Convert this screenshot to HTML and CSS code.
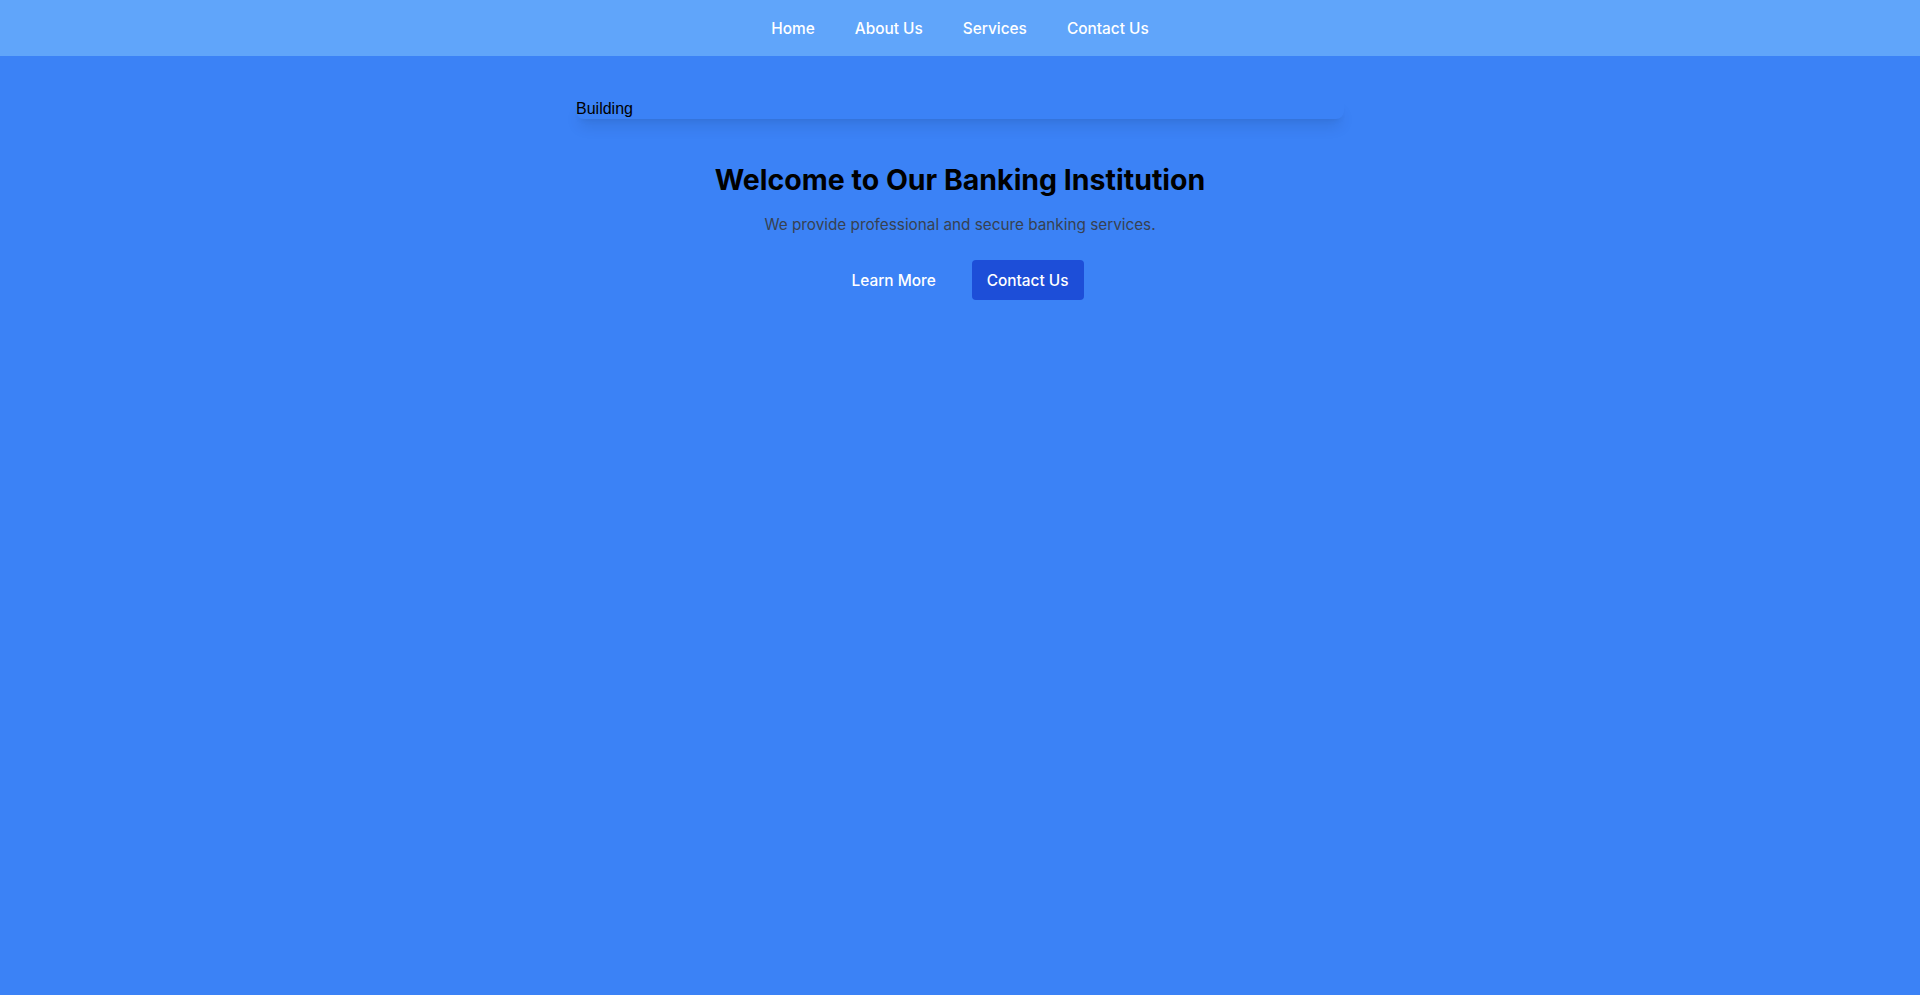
FILE: index.html
```html
<!DOCTYPE html>
<html lang="en">
<head>
<meta charset="utf-8">
<title>Banking Institution</title>
<link rel="stylesheet" href="styles.css">
</head>
<body>
<nav class="nav">
  <a class="nav-link" href="#">Home</a>
  <a class="nav-link" href="#">About Us</a>
  <a class="nav-link" href="#">Services</a>
  <a class="nav-link" href="#">Contact Us</a>
</nav>
<main class="main">
  <div class="hero-image">Building</div>
  <section class="hero">
    <h1 class="hero-title">Welcome to Our Banking Institution</h1>
    <p class="hero-sub">We provide professional and secure banking services.</p>
    <div class="actions">
      <a class="btn btn-ghost" href="#">Learn More</a>
      <a class="btn btn-solid" href="#">Contact Us</a>
    </div>
  </section>
</main>
</body>
</html>
```

FILE: styles.css
```css
* { box-sizing: border-box; }
html, body { height: 100%; }
body {
  margin: 0;
  background: #3b82f6;
  font-family: Inter, "Noto Sans", sans-serif;
  color: #000;
}
.nav {
  height: 56px;
  background: #60a5fa;
  display: flex;
  justify-content: center;
  align-items: center;
  gap: 40px;
}
.nav-link {
  color: #fff;
  text-decoration: none;
  font-size: 15.4px;
  font-weight: 500;
}
.main {
  max-width: 768px;
  margin: 0 auto;
  padding-top: 44px;
}
.hero-image {
  width: 100%;
  height: 19px;
  border-radius: 8px;
  box-shadow: 0 10px 15px -3px rgba(0,0,0,0.1), 0 4px 6px -4px rgba(0,0,0,0.1);
  font-family: "Liberation Sans", Arial, sans-serif;
  font-size: 16px;
  line-height: 17px;
  color: #000;
}
.hero {
  text-align: center;
  padding-top: 43px;
}
.hero-title {
  margin: 0;
  font-size: 28.5px;
  font-weight: 700;
  line-height: 36px;
  color: #000;
}
.hero-sub {
  margin: 13px 0 0;
  font-size: 15.3px;
  line-height: 28px;
  color: #374151;
}
.actions {
  margin-top: 21px;
  display: flex;
  justify-content: center;
  gap: 21px;
}
.btn {
  height: 40px;
  padding: 0 15px;
  display: inline-flex;
  align-items: center;
  color: #fff;
  text-decoration: none;
  font-size: 15.4px;
  font-weight: 500;
  border-radius: 4px;
}
.btn-solid { background: #1d4ed8; }
```
